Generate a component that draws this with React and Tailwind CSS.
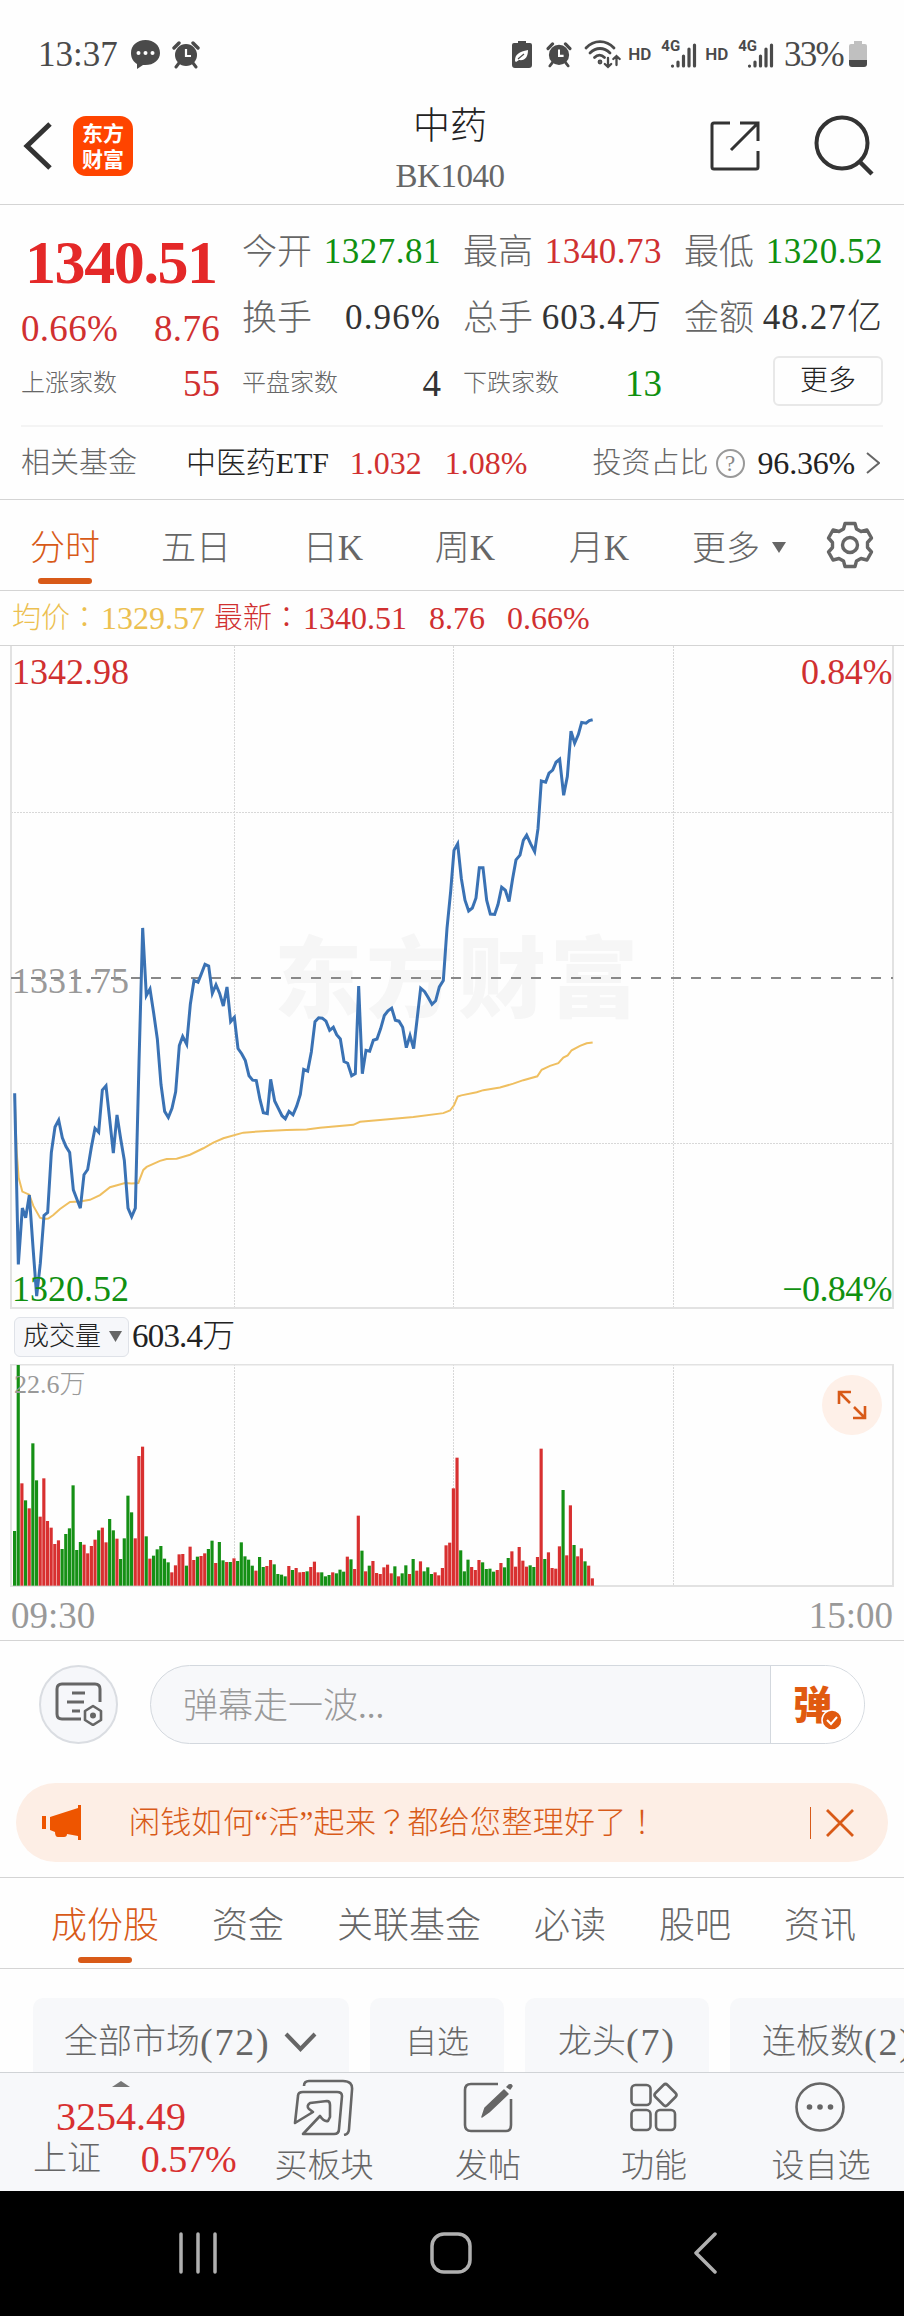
import React from 'react';

// one price per minute, in chart units
const pricePoints =
  '44,1045 55,1440 67,1310 77,1332 88,1280 99,1400 110,1513 121,1437 132,1327 143,1320 154,1182 165,1123 176,1107 187,1148 198,1168 209,1182 220,1268 231,1290 241,1310 252,1233 263,1221 274,1170 285,1126 296,1135 307,1038 318,1028 329,1105 340,1183 351,1095 362,1150 373,1200 384,1310 395,1330 406,1310 417,975 428,664 439,820 450,805 461,860 472,920 483,1025 494,1087 505,1101 516,1080 527,1042 538,935 548,914 560,932 571,840 582,785 594,789 604,770 615,748 626,752 637,815 648,795 659,815 670,844 681,800 692,880 703,870 714,942 725,954 736,970 747,1005 758,1015 769,1016 780,1060 790,1090 802,1092 812,1013 824,1063 835,1080 846,1097 856,1104 867,1087 879,1095 890,1075 901,1048 911,990 923,994 934,950 945,880 956,871 967,872 978,879 989,900 1000,893 1010,910 1021,920 1032,972 1043,976 1055,1005 1066,1000 1076,798 1087,1000 1098,946 1109,948 1120,923 1131,920 1142,896 1153,866 1164,855 1175,849 1186,877 1197,879 1208,893 1219,940 1230,912 1241,942 1252,870 1262,803 1274,811 1285,825 1296,840 1307,832 1318,800 1330,785 1341,665 1352,580 1362,485 1373,470 1384,550 1395,600 1406,625 1417,618 1428,595 1438,525 1449,525 1460,600 1471,632 1484,633 1494,610 1505,570 1516,577 1527,603 1538,550 1548,507 1560,496 1570,462 1580,450 1592,470 1604,488 1614,435 1624,325 1637,328 1647,307 1658,300 1668,282 1679,275 1691,358 1702,315 1713,210 1724,238 1735,218 1745,190 1758,192 1768,186 1778,184';

const averagePoints =
  '44,1050 50,1180 56,1240 67,1272 88,1279 100,1305 120,1332 132,1335 145,1334 160,1326 180,1312 210,1296 240,1295 270,1291 300,1280 330,1262 375,1252 395,1253 415,1252 430,1222 440,1215 480,1201 500,1197 530,1196 570,1187 610,1172 640,1159 670,1149 730,1136 800,1132 860,1130 920,1129 960,1125 1060,1118 1080,1111 1140,1107 1240,1100 1330,1091 1350,1085 1362,1073 1373,1053 1384,1050 1430,1043 1450,1038 1500,1032 1540,1023 1570,1015 1612,1006 1625,991 1650,982 1675,976 1690,963 1703,958 1715,946 1740,936 1760,930 1778,928';

// g = falling minute, r = rising minute, number = top of the bar
const volumes =
  'g693 g195 r550 g601 r625 g430 g541 r650 r535 r663 r683 r732 r721 g747 g702 g685 g556 g750 g726 r734 r760 r738 r719 g691 r683 r727 g657 g691 r716 g777 g715 g587 g637 r715 r468 r440 g709 r776 g767 g748 g738 g776 g787 r817 r796 r763 r762 g797 r740 r780 g770 r768 r760 g747 g722 r789 g726 g781 r786 g786 r775 g783 g727 g769 g779 g797 r812 g771 g801 r798 r780 g793 g822 g824 g829 r798 g810 r804 r817 r816 g814 r801 r785 r817 g817 g829 g825 r817 g820 g809 g815 r770 g778 r807 r647 g752 r814 g797 r783 r819 r822 r802 r794 r820 g799 r829 g820 g796 r822 g777 r812 r784 g814 g802 g822 r817 r826 r804 r736 r728 r565 r473 g751 g814 g779 r801 r810 r780 g787 g807 g806 g815 r810 r789 g802 g774 r754 r800 r741 r782 r800 g796 g801 r771 r446 g777 r757 r804 r806 r739 g570 r766 r616 g735 r769 r745 g784 r797 r835'.split(' ');

const CLOCK = (
  <>
    <circle cx="14" cy="15" r="11" fill="#4a4a4a" />
    <path d="M2 8 7 3M26 8l-5-5" stroke="#4a4a4a" strokeWidth="3.4" strokeLinecap="round" />
    <path d="M7 23l-3 4M21 23l3 4" stroke="#4a4a4a" strokeWidth="3" strokeLinecap="round" />
    <path d="M14 9v7h5" stroke="#fff" strokeWidth="2.2" fill="none" />
  </>
);

const Clock = ({ className }) => (
  <svg className={className} width="28" height="29" viewBox="0 0 28 29">{CLOCK}</svg>
);

const Signal = () => (
  <div className="flex">
    <span className="-mr-[10px] mt-[-1px] h-[14px] font-['Roboto'] text-[15px] font-bold leading-[14px]">4G</span>
    <svg width="27" height="29" viewBox="0 0 27 29" stroke="#4a4a4a" strokeWidth="3.2" strokeLinecap="round">
      <path d="M2.5 26v.1M8 22v4M13.5 16v10M19 9v17M24.5 5v21" />
    </svg>
  </div>
);

const StatusBar = () => (
  <div className="flex h-[80px] items-center pl-[38px] pr-[37px] pt-[28px] leading-none text-[#4a4a4a]">
    <span className="text-[35px] w-[92px]">13:37</span>
    <svg width="31" height="31" viewBox="0 0 31 31">
      <path d="M15.500 1C7 1 1 6.500 1 14c0 6 3 9 6 11v5l6-4c10 1 17-5 17-12C30 6.500 24 1 15.500 1z" fill="#4a4a4a" />
      <circle cx="8.500" cy="14" r="2" fill="#fff" />
      <circle cx="15.500" cy="14" r="2" fill="#fff" />
      <circle cx="22.500" cy="14" r="2" fill="#fff" />
    </svg>
    <Clock className="ml-[11px]" />
    <div className="ml-auto flex items-center">
      <svg width="20" height="28" viewBox="0 0 20 28">
        <path d="M6 1h8v2h4q2 0 2 2v20q0 3-3 3H3q-3 0-3-3V5q0-2 2-2h4z" fill="#4a4a4a" />
        <path d="M3 21c0-7 4-9 13-11 0 7-3 11-9 10l-3 2z" fill="#fff" />
        <path d="M6 19l6-5" stroke="#4a4a4a" strokeWidth="1.200" />
      </svg>
      <Clock className="ml-[13px] scale-[.92]" />
      <svg className="ml-[11px]" width="38" height="30" viewBox="0 0 38 30" fill="none" stroke="#4a4a4a" strokeWidth="2.800" strokeLinecap="round">
        <path d="M2 9c8-8.500 20-8.500 28 0M6 14c6-6 14-6 20 0M10.500 18.500c3-3 7-3 10 0" />
        <circle cx="16" cy="23" r="1" />
        <path d="M24 19v9M20.800 25l3.200 3 3.200-3M32.500 26v-9M29.300 20l3.200-3 3.200 3" strokeWidth="2.300" />
      </svg>
      <span className="ml-[6px] w-[33px] font-['Roboto'] text-[17px] font-semibold">HD</span>
      <Signal />
      <span className="ml-[8px] w-[33px] font-['Roboto'] text-[17px] font-semibold">HD</span>
      <Signal />
      <span className="ml-[10px] w-[65px] text-[35px] tracking-[-1.800px]">33%</span>
      <svg width="18" height="28" viewBox="0 0 18 28">
        <path d="M5 1h8v3h3q2 0 2 2v15H0V6q0-2 2-2h3z" fill="#c0c0c0" />
        <path d="M0 20h18v4q0 3-3 3H3q-3 0-3-3z" fill="#4a4a4a" />
      </svg>
    </div>
  </div>
);

const Header = () => (
  <div className="flex h-[125px] items-center border-b border-[#d4d4d4] pl-[22px] pr-[29px]">
    <div className="flex w-[360px] items-center">
      <svg className="mt-[7px]" width="32" height="50" viewBox="0 0 32 50" fill="none" stroke="#333" strokeWidth="5">
        <path d="M28 3 5 25l23 22" />
      </svg>
      <div className="ml-[19px] mt-[7px] flex h-[60px] w-[60px] flex-col items-center justify-center rounded-[13px] bg-[#ff4400] font-['Noto_Sans_CJK_SC',sans-serif] text-[21px] font-bold leading-none text-white">
        <span>东方</span>
        <span className="mt-[5px]">财富</span>
      </div>
    </div>
    <div className="flex w-[136px] flex-col items-center leading-none">
      <span className="mt-[16px] text-[37px] text-[#222]">中药</span>
      <span className="mt-[15px] text-[33px] tracking-[-0.500px] text-[#666]">BK1040</span>
    </div>
    <svg className="ml-auto mt-[7px]" width="50" height="50" viewBox="0 0 50 50" fill="none" stroke="#333" strokeWidth="3">
      <path d="M20 2H4q-2 0-2 2v42q0 2 2 2h42q2 0 2-2V30M30 2h18v18M48 2 21 29" />
    </svg>
    <svg className="ml-[54px] mt-[7px]" width="61" height="61" viewBox="0 0 61 61" fill="none" stroke="#333" strokeWidth="4">
      <circle cx="28" cy="28" r="25.500" />
      <path d="M45 46l13 13" strokeWidth="4.500" />
    </svg>
  </div>
);

const Stat = ({ label, value, color }) => (
  <div className="flex h-[66px] items-center justify-between">
    <span className="pt-[3px] text-[35px] text-[#666]">{label}</span>
    <span className={`text-[35px] ${color}`}>{value}</span>
  </div>
);

const Count = ({ label, value, color }) => (
  <div className="flex h-[66px] items-center justify-between">
    <span className="text-[24px] text-[#666]">{label}</span>
    <span className={`text-[37px] ${color}`}>{value}</span>
  </div>
);

const Quote = () => (
  <div className="h-[295px] border-b border-[#d4d4d4] px-[21px] pt-[13px] leading-none">
    <div className="grid h-[209px] grid-cols-4 gap-[22px] border-b-2 border-[#f4f4f4]">
      <div>
        <div className="flex h-[88px] items-center pl-[4px] text-[62px] font-bold tracking-[-1.400px] text-[#e42828]">1340.51</div>
        <div className="flex h-[44px] items-center justify-between text-[37px] tracking-[0.300px] text-[#d03030]">
          <span>0.66%</span>
          <span>8.76</span>
        </div>
        <Count label="上涨家数" value="55" color="text-[#d03030]" />
      </div>
      <div>
        <Stat label="今开" value="1327.81" color="tracking-[0.500px] text-[#109010]" />
        <Stat label="换手" value="0.96%" color="tracking-[1.100px] text-[#333]" />
        <Count label="平盘家数" value="4" color="text-[#333]" />
      </div>
      <div>
        <Stat label="最高" value="1340.73" color="tracking-[0.500px] text-[#d03030]" />
        <Stat label="总手" value="603.4万" color="tracking-[1.100px] text-[#333]" />
        <Count label="下跌家数" value="13" color="text-[#109010]" />
      </div>
      <div>
        <Stat label="最低" value="1320.52" color="tracking-[0.500px] text-[#109010]" />
        <Stat label="金额" value="48.27亿" color="tracking-[1.100px] text-[#333]" />
        <div className="mt-[6px] flex justify-end">
          <button className="h-[50px] w-[110px] rounded-[6px] border-2 border-[#e8e8e8] text-[28px] leading-none text-[#222]">更多</button>
        </div>
      </div>
    </div>
    <div className="flex h-[72px] items-center">
      <span className="text-[29px] text-[#666]">相关基金</span>
      <span className="ml-[49px] text-[30px] tracking-[-0.100px] text-[#222]">中医药ETF</span>
      <span className="ml-[21px] text-[32px] text-[#d03030]">1.032</span>
      <span className="ml-[23px] text-[32px] text-[#d03030]">1.08%</span>
      <span className="ml-auto text-[29px] text-[#666]">投资占比</span>
      <span className="ml-[7px] flex h-[29px] w-[29px] items-center justify-center rounded-full border-[2.500px] border-[#999] text-[23px] text-[#888]">?</span>
      <span className="ml-[13px] text-[32px] tracking-[-0.200px] text-[#222]">96.36%</span>
      <svg className="ml-[11px] mr-[3px]" width="14" height="24" viewBox="0 0 14 24" fill="none" stroke="#666" strokeWidth="2">
        <path d="M1 2l12 10L1 22" />
      </svg>
    </div>
  </div>
);

const ChartTabs = () => (
  <div className="flex h-[91px] border-b border-[#d4d4d4] text-[35px] leading-none text-[#666]">
    <div className="flex w-[130px] flex-col items-center text-[#d85a18]">
      <span className="mt-[31px]">分时</span>
      <span className="mt-[12px] h-[6px] w-[54px] rounded-full bg-[#d85a18]" />
    </div>
    <span className="mt-[31px] w-[132px] text-center">五日</span>
    <span className="mt-[31px] w-[142px] text-center">日K</span>
    <span className="mt-[31px] w-[122px] text-center">周K</span>
    <span className="mt-[31px] w-[146px] text-center">月K</span>
    <div className="mt-[30px] flex h-[35px] w-[134px] items-center justify-center">
      <span className="pt-[2px] text-[34px]">更多</span>
      <svg className="ml-[12px]" width="14" height="11" viewBox="0 0 14 11" fill="#666"><path d="M0 0h14L7 11z" /></svg>
    </div>
    <svg className="ml-[20px] mt-[21px]" width="48" height="48" viewBox="0 0 48 48" fill="none" stroke="#666" strokeWidth="3.400" strokeLinejoin="round">
      <path d="M19 2.500h10l1.500 5.500 4.500 2.500 6-1.500 4.500 8-4 4.500v5l4 4.500-4.500 8-6-1.500-4.500 2.500-1.500 5.500H19L17.500 40 13 37.500 7 39l-4.500-8 4-4.500v-5l-4-4.500L7 9l6 1.500L17.500 8z" />
      <circle cx="24" cy="24" r="7.500" />
    </svg>
  </div>
);

const ChartInfo = () => (
  <div className="flex h-[55px] items-center border-b border-[#d4d4d4] pl-[12px] font-['Liberation_Serif','Noto_Sans_CJK_TC',serif] leading-none text-[#d03030]">
    <span className="text-[29px] text-[#ecc050]">均价：</span>
    <span className="ml-[2px] w-[113px] text-[32px] text-[#ecc050]">1329.57</span>
    <span className="text-[29px]">最新：</span>
    <span className="ml-[2px] w-[126px] text-[32px]">1340.51</span>
    <span className="w-[78px] text-[32px]">8.76</span>
    <span className="text-[32px]">0.66%</span>
  </div>
);

const PriceChart = () => (
  <div className="relative h-[663px]">
    <svg className="block" width="904" height="663" viewBox="0 646 904 663" fill="none">
      <g fill="#f6f6f6" fontFamily="Noto Sans CJK SC" fontWeight="900" fontSize="88">
        <text x="274" y="1010" textLength="364">东方财富</text>
      </g>
      <path d="M234.500 646v662M453.500 646v662M673.500 646v662M11 812.500h882M11 1143.500h882" stroke="#d8d8d8" strokeDasharray="2 1" />
      <path d="M11 646v662h882V646" stroke="#e2e2e2" strokeWidth="2" />
      <path d="M11 978h882" stroke="#888" strokeWidth="2" strokeDasharray="10 10" />
      <g transform="translate(0 640) scale(.33333 .43366)">
        <polyline points={averagePoints} stroke="#efbf60" strokeWidth="2" vectorEffect="non-scaling-stroke" />
        <polyline points={pricePoints} stroke="#3a72b4" strokeWidth="3" vectorEffect="non-scaling-stroke" />
      </g>
    </svg>
    <div className="absolute inset-0 flex flex-col justify-between pb-[2px] pl-[12px] pr-[12px] pt-[8px] text-[36px] leading-none">
      <div className="flex justify-between text-[#d03030]">
        <span>1342.98</span>
        <span className="tracking-[-0.400px]">0.84%</span>
      </div>
      <span className="text-[#999]">1331.75</span>
      <div className="flex justify-between text-[#109010]">
        <span>1320.52</span>
        <span className="tracking-[-0.600px]">−0.84%</span>
      </div>
    </div>
  </div>
);

const VolumeChart = () => (
  <div className="h-[332px] border-b border-[#d4d4d4] leading-none">
    <div className="flex h-[55px] items-center pl-[14px]">
      <div className="flex h-[40px] w-[115px] items-center rounded-[6px] border border-[#dfe2e8] bg-[#f6f7fa] pl-[8px] text-[26px] text-[#222]">
        成交量
        <svg className="ml-[8px]" width="13" height="11" viewBox="0 0 13 11" fill="#666"><path d="M0 0h13L6.500 11z" /></svg>
      </div>
      <span className="ml-[3px] text-[33px] tracking-[-0.800px] text-[#222]">603.4万</span>
    </div>
    <div className="relative h-[223px]">
      <svg className="block" width="904" height="223" viewBox="0 1364 904 223" fill="none">
        <path d="M234.500 1364v222M453.500 1364v222M673.500 1364v222" stroke="#d8d8d8" strokeDasharray="2 1" />
        <path d="M11 1364.500h882v221.500H11z" stroke="#e2e2e2" strokeWidth="2" />
        <g transform="translate(0 1300) scale(.33333)">
          {volumes.map((v, i) => (
            <rect key={i} x={39 + i * 10.97} y={v.slice(1)} width="9.500" height={857 - v.slice(1)} fill={v[0] === 'g' ? '#159015' : '#d83030'} />
          ))}
        </g>
      </svg>
      <span className="absolute left-[14px] top-[8px] text-[26px] text-[#999]">22.6万</span>
      <div className="absolute right-[22px] top-[11px] flex h-[60px] w-[60px] items-center justify-center rounded-full bg-[#fef0e8]">
        <svg width="30" height="30" viewBox="0 0 30 30" fill="none" stroke="#d85a18" strokeWidth="2.600">
          <path d="M2 14V2h12M2 2l11 11M28 16v12H16M28 28 17 17" />
        </svg>
      </div>
    </div>
    <div className="flex h-[52px] items-center justify-between pl-[11px] pr-[11px] pt-[5px] text-[37px] text-[#999]">
      <span>09:30</span>
      <span>15:00</span>
    </div>
  </div>
);

const Comment = () => (
  <div className="flex h-[126px] items-center pl-[39px] pr-[39px]">
    <div className="flex h-[79px] w-[79px] items-center justify-center rounded-full border-2 border-[#dadde2] bg-[#f6f7fa]">
      <svg width="48" height="44" viewBox="0 0 48 44" fill="none" stroke="#666" strokeWidth="3">
        <path d="M45 20V7q0-5-5-5H7Q2 2 2 7v25q0 5 5 5h19M17 11h13M12 20h17M17 29h8" />
        <path d="M38 24l8 5v9l-8 5-8-5v-9z" strokeWidth="2.600" strokeLinejoin="round" />
        <circle cx="38" cy="33.500" r="1.500" />
      </svg>
    </div>
    <div className="ml-[32px] flex h-[79px] flex-1 overflow-hidden rounded-full border border-[#d3d8de] bg-[#f7f8fa]">
      <span className="flex flex-1 items-center pl-[32px] pt-[5px] text-[35px] leading-none text-[#999]">弹幕走一波...</span>
      <div className="relative flex w-[94px] border-l border-[#d3d8de] bg-white pl-[22px] font-['Noto_Sans_CJK_SC',sans-serif]">
        <span className="mt-[16px] h-[40px] text-[39px] font-black leading-[40px] text-[#e05a10]">弹</span>
        <svg className="absolute left-[50px] top-[43px]" width="22" height="22" viewBox="0 0 22 22">
          <circle cx="11" cy="11" r="10" fill="#e05a10" stroke="#fff" strokeWidth="1.500" />
          <path d="M6 11l4 4 6-7" fill="none" stroke="#fff" strokeWidth="2" />
        </svg>
      </div>
    </div>
  </div>
);

const Notice = () => (
  <div className="h-[111px] border-b border-[#d4d4d4] pl-[16px] pr-[16px] pt-[16px]">
    <div className="flex h-[79px] items-center rounded-full bg-[#fdeee5] pl-[26px] pr-[18px] text-[#d85a18]">
      <svg width="40" height="35" viewBox="0 0 40 35" fill="#ee5500">
        <path d="M0 11h4v13H0zM8 12 36 3V0h3v35h-3v-4l-11-2q0 3-3 3h-6q-3 0-3-5l-5-2z" />
      </svg>
      <span className="ml-[47px] font-['Liberation_Serif','Noto_Sans_CJK_TC',serif] text-[31px] leading-none tracking-[0.300px]">闲钱如何“活”起来？都给您整理好了！</span>
      <span className="ml-auto h-[32px] w-px bg-[#d85a18]" />
      <svg className="ml-[15px] mr-[16px]" width="28" height="28" viewBox="0 0 28 28" stroke="#d85a18" strokeWidth="2.800">
        <path d="M1 1l26 26M27 1 1 27" />
      </svg>
    </div>
  </div>
);

const sections = ['资金', '关联基金', '必读', '股吧', '资讯'];

const SectionTabs = () => (
  <div className="flex h-[91px] gap-[53px] border-b border-[#d4d4d4] pl-[51px] pt-[30px] text-[36px] leading-none text-[#666]">
    <div className="flex flex-col items-center text-[#d85a18]">
      <span>成份股</span>
      <span className="mt-[13px] h-[6px] w-[54px] rounded-full bg-[#d85a18]" />
    </div>
    {sections.map((s) => (
      <span key={s} className="whitespace-nowrap">{s}</span>
    ))}
  </div>
);

const Chips = () => (
  <div className="flex h-[103px] gap-[21px] overflow-hidden whitespace-nowrap pl-[33px] pt-[29px] text-[34px] leading-none text-[#666]">
    <div className="flex h-[88px] w-[316px] shrink-0 items-center rounded-[10px] bg-[#f7f8fa] pl-[31px]">
      全部市场<span className="text-[38px] tracking-[1.800px]">(72)</span>
      <svg className="ml-[13px]" width="33" height="20" viewBox="0 0 33 20" fill="none" stroke="#666" strokeWidth="4">
        <path d="M2 2l14.500 15L31 2" />
      </svg>
    </div>
    <div className="flex h-[88px] w-[134px] shrink-0 items-center justify-center rounded-[10px] bg-[#f7f8fa] text-[32px]">自选</div>
    <div className="flex h-[88px] w-[184px] shrink-0 items-center rounded-[10px] bg-[#f7f8fa] pl-[33px]">
      龙头<span className="text-[38px] tracking-[1.800px]">(7)</span>
    </div>
    <div className="flex h-[88px] w-[220px] shrink-0 items-center rounded-[10px] bg-[#f7f8fa] pl-[32px]">
      连板数<span className="text-[38px] tracking-[1.800px]">(2)</span>
    </div>
  </div>
);

const NavItem = ({ label, className, children }) => (
  <div className={`flex flex-col items-center ${className}`}>
    <svg className="mt-[5px]" width="62" height="58" viewBox="0 0 62 58" fill="none" stroke="#666" strokeWidth="2.600" strokeLinejoin="round">
      {children}
    </svg>
    <span className="mt-[14px] text-[33px]">{label}</span>
  </div>
);

const BottomNav = () => (
  <div className="flex h-[119px] border-t border-[#d0d3d6] bg-[#f7f8fa] leading-none text-[#666]">
    <div className="flex w-[264px] flex-col pl-[33px]">
      <svg className="ml-[79px] mt-[8px]" width="18" height="6" viewBox="0 0 18 6" fill="#777"><path d="M9 0l9 6H0z" /></svg>
      <span className="ml-[23px] mt-[10px] text-[40px] text-[#d83030]">3254.49</span>
      <div className="mt-[3px] flex w-[203px] items-center justify-between">
        <span className="text-[34px]">上证</span>
        <span className="text-[38px] tracking-[-0.600px] text-[#d83030]">0.57%</span>
      </div>
    </div>
    <NavItem label="买板块" className="w-[120px]">
      <path d="M11 8q0-5 5-5h34q10 0 9 9l-3 39q0 5-5 6" />
      <path d="M5 18q0-4 5-4h34q5 0 5 4l-3 33q0 5-5 5H10l17-18q4 6 8 5l2-4V27q0-4-3-4l-17 2q-4 3-1 6l4 3-18 11z" />
    </NavItem>
    <NavItem label="发帖" className="ml-[44px] w-[120px]">
      <path d="M41 6H14q-6 0-6 6v35q0 6 6 6h35q5 0 5-6V21" />
      <path d="M25 39l3-9 19-18 4 4-19 18zM50 9l2-2q2-1 3 1l-2 3z" fill="#666" strokeWidth="1.500" />
    </NavItem>
    <NavItem label="功能" className="ml-[46px] w-[120px]">
      <rect x="8.500" y="7" width="19" height="20" rx="4" />
      <rect x="8.500" y="32" width="19" height="20" rx="4" />
      <rect x="33" y="32" width="19" height="20" rx="4" />
      <path d="M40.500 7q2-2 4 0l8 8q2 2 0 4l-8 8q-2 2-4 0l-8-8q-2-2 0-4z" />
    </NavItem>
    <NavItem label="设自选" className="ml-[47px] w-[120px]">
      <circle cx="30" cy="29" r="23.500" />
      <g fill="#666" stroke="none">
        <circle cx="19.500" cy="29" r="2.800" />
        <circle cx="30" cy="29" r="2.800" />
        <circle cx="40.500" cy="29" r="2.800" />
      </g>
    </NavItem>
  </div>
);

const SystemNav = () => (
  <div className="flex h-[126px] items-center bg-black pb-[3px] pl-[179px]">
    <svg width="38" height="42" viewBox="0 0 38 42" stroke="#b0b0b0" strokeWidth="3.500" strokeLinecap="round">
      <path d="M2 2v38M19 2v38M36 2v38" />
    </svg>
    <svg className="ml-[213px]" width="42" height="42" viewBox="0 0 42 42" fill="none" stroke="#b0b0b0" strokeWidth="3.500">
      <rect x="2" y="2" width="38" height="38" rx="12" />
    </svg>
    <svg className="ml-[221px]" width="24" height="42" viewBox="0 0 24 42" fill="none" stroke="#b0b0b0" strokeWidth="3.500" strokeLinecap="round" strokeLinejoin="round">
      <path d="M22 2 3 21l19 19" />
    </svg>
  </div>
);

const App = () => {
  return (
    <div className="w-[904px] overflow-hidden bg-[#fefefe] font-['Liberation_Serif','Noto_Sans_CJK_SC',serif] font-light">
      <StatusBar />
      <Header />
      <Quote />
      <ChartTabs />
      <ChartInfo />
      <PriceChart />
      <VolumeChart />
      <Comment />
      <Notice />
      <SectionTabs />
      <Chips />
      <BottomNav />
      <SystemNav />
    </div>
  );
};

export default App;
